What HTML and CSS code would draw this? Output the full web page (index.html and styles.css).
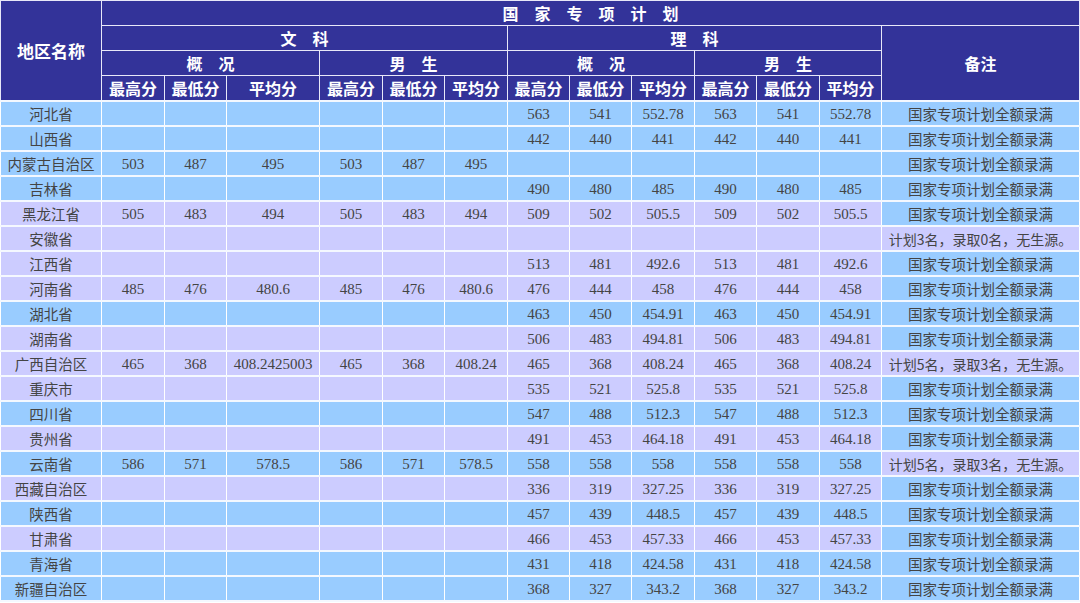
FILE: index.html
```html
<!DOCTYPE html>
<html lang="zh-CN">
<head>
<meta charset="utf-8">
<title>国家专项计划</title>
<link rel="stylesheet" href="styles.css">
</head>
<body>
<table class="score">
<colgroup>
<col class="c-name"><col class="c-n"><col class="c-n2"><col class="c-avg"><col class="c-n"><col class="c-n2"><col class="c-n"><col class="c-n2"><col class="c-n2"><col class="c-n"><col class="c-n2"><col class="c-n"><col class="c-n2"><col class="c-note">
</colgroup>
<thead>
<tr><th rowspan="4">地区名称</th><th colspan="13">国&emsp;家&emsp;专&emsp;项&emsp;计&emsp;划</th></tr>
<tr><th colspan="6">文&emsp;科</th><th colspan="6">理&emsp;科</th><th rowspan="3">备注</th></tr>
<tr><th colspan="3">概&emsp;况</th><th colspan="3">男&emsp;生</th><th colspan="3">概&emsp;况</th><th colspan="3">男&emsp;生</th></tr>
<tr><th>最高分</th><th>最低分</th><th>平均分</th><th>最高分</th><th>最低分</th><th>平均分</th><th>最高分</th><th>最低分</th><th>平均分</th><th>最高分</th><th>最低分</th><th>平均分</th></tr>
</thead>
<tbody>
<tr class="b"><td>河北省</td><td></td><td></td><td></td><td></td><td></td><td></td><td>563</td><td>541</td><td>552.78</td><td>563</td><td>541</td><td>552.78</td><td class="nb">国家专项计划全额录满</td></tr>
<tr class="b"><td>山西省</td><td></td><td></td><td></td><td></td><td></td><td></td><td>442</td><td>440</td><td>441</td><td>442</td><td>440</td><td>441</td><td class="nb">国家专项计划全额录满</td></tr>
<tr class="b"><td>内蒙古自治区</td><td>503</td><td>487</td><td>495</td><td>503</td><td>487</td><td>495</td><td></td><td></td><td></td><td></td><td></td><td></td><td class="nb">国家专项计划全额录满</td></tr>
<tr class="b"><td>吉林省</td><td></td><td></td><td></td><td></td><td></td><td></td><td>490</td><td>480</td><td>485</td><td>490</td><td>480</td><td>485</td><td class="nb">国家专项计划全额录满</td></tr>
<tr class="l"><td>黑龙江省</td><td>505</td><td>483</td><td>494</td><td>505</td><td>483</td><td>494</td><td>509</td><td>502</td><td>505.5</td><td>509</td><td>502</td><td>505.5</td><td class="nb">国家专项计划全额录满</td></tr>
<tr class="l"><td>安徽省</td><td></td><td></td><td></td><td></td><td></td><td></td><td></td><td></td><td></td><td></td><td></td><td></td><td class="nl">计划3名，录取0名，无生源。</td></tr>
<tr class="l"><td>江西省</td><td></td><td></td><td></td><td></td><td></td><td></td><td>513</td><td>481</td><td>492.6</td><td>513</td><td>481</td><td>492.6</td><td class="nb">国家专项计划全额录满</td></tr>
<tr class="l"><td>河南省</td><td>485</td><td>476</td><td>480.6</td><td>485</td><td>476</td><td>480.6</td><td>476</td><td>444</td><td>458</td><td>476</td><td>444</td><td>458</td><td class="nb">国家专项计划全额录满</td></tr>
<tr class="b"><td>湖北省</td><td></td><td></td><td></td><td></td><td></td><td></td><td>463</td><td>450</td><td>454.91</td><td>463</td><td>450</td><td>454.91</td><td class="nb">国家专项计划全额录满</td></tr>
<tr class="l"><td>湖南省</td><td></td><td></td><td></td><td></td><td></td><td></td><td>506</td><td>483</td><td>494.81</td><td>506</td><td>483</td><td>494.81</td><td class="nb">国家专项计划全额录满</td></tr>
<tr class="l"><td>广西自治区</td><td>465</td><td>368</td><td>408.2425003</td><td>465</td><td>368</td><td>408.24</td><td>465</td><td>368</td><td>408.24</td><td>465</td><td>368</td><td>408.24</td><td class="nl">计划5名，录取3名，无生源。</td></tr>
<tr class="l"><td>重庆市</td><td></td><td></td><td></td><td></td><td></td><td></td><td>535</td><td>521</td><td>525.8</td><td>535</td><td>521</td><td>525.8</td><td class="nb">国家专项计划全额录满</td></tr>
<tr class="b"><td>四川省</td><td></td><td></td><td></td><td></td><td></td><td></td><td>547</td><td>488</td><td>512.3</td><td>547</td><td>488</td><td>512.3</td><td class="nb">国家专项计划全额录满</td></tr>
<tr class="l"><td>贵州省</td><td></td><td></td><td></td><td></td><td></td><td></td><td>491</td><td>453</td><td>464.18</td><td>491</td><td>453</td><td>464.18</td><td class="nb">国家专项计划全额录满</td></tr>
<tr class="b"><td>云南省</td><td>586</td><td>571</td><td>578.5</td><td>586</td><td>571</td><td>578.5</td><td>558</td><td>558</td><td>558</td><td>558</td><td>558</td><td>558</td><td class="nl">计划5名，录取3名，无生源。</td></tr>
<tr class="l"><td>西藏自治区</td><td></td><td></td><td></td><td></td><td></td><td></td><td>336</td><td>319</td><td>327.25</td><td>336</td><td>319</td><td>327.25</td><td class="nb">国家专项计划全额录满</td></tr>
<tr class="b"><td>陕西省</td><td></td><td></td><td></td><td></td><td></td><td></td><td>457</td><td>439</td><td>448.5</td><td>457</td><td>439</td><td>448.5</td><td class="nb">国家专项计划全额录满</td></tr>
<tr class="l"><td>甘肃省</td><td></td><td></td><td></td><td></td><td></td><td></td><td>466</td><td>453</td><td>457.33</td><td>466</td><td>453</td><td>457.33</td><td class="nb">国家专项计划全额录满</td></tr>
<tr class="b"><td>青海省</td><td></td><td></td><td></td><td></td><td></td><td></td><td>431</td><td>418</td><td>424.58</td><td>431</td><td>418</td><td>424.58</td><td class="nb">国家专项计划全额录满</td></tr>
<tr class="b"><td>新疆自治区</td><td></td><td></td><td></td><td></td><td></td><td></td><td>368</td><td>327</td><td>343.2</td><td>368</td><td>327</td><td>343.2</td><td class="nb">国家专项计划全额录满</td></tr>
</tbody>
</table>
</body>
</html>
```
FILE: styles.css
```css
html, body {
  margin: 0;
  padding: 0;
  background: #ffffff;
}

.score {
  width: 1080px;
  table-layout: fixed;
  border-collapse: collapse;
  font-family: "Liberation Serif", "Noto Sans CJK SC", serif;
}

.c-name { width: 101px; }
.c-n { width: 63px; }
.c-n2 { width: 62px; }
.c-avg { width: 93px; }
.c-note { width: 198px; }

.score th {
  background: #333399;
  color: #ffffff;
  font-family: "Noto Sans CJK SC", sans-serif;
  font-weight: 700;
  font-size: 16px;
  line-height: 20px;
  height: 24px;
  padding: 0;
  text-align: center;
  border: 1px solid #e8e8f8;
  white-space: nowrap;
  overflow: hidden;
}

.score thead tr:first-child th:first-child {
  font-size: 17px;
}

.score td {
  height: 23px;
  padding: 0;
  text-align: center;
  color: #444444;
  font-size: 15px;
  line-height: 20px;
  border-left: 1px solid #ffffff;
  border-right: 1px solid #ffffff;
  border-top: 2px solid #f4f8ff;
  border-bottom: 2px solid #f4f8ff;
  white-space: nowrap;
  overflow: hidden;
}

.score td:first-child,
.score td.nb,
.score td.nl {
  font-family: "Noto Sans CJK SC", sans-serif;
  font-size: 14.5px;
}

.score tr.b td { background: #99ccff; }
.score tr.l td { background: #ccccff; }
.score tr td.nb { background: #99ccff; }
.score tr td.nl { background: #ccccff; font-size: 14px; }
```
